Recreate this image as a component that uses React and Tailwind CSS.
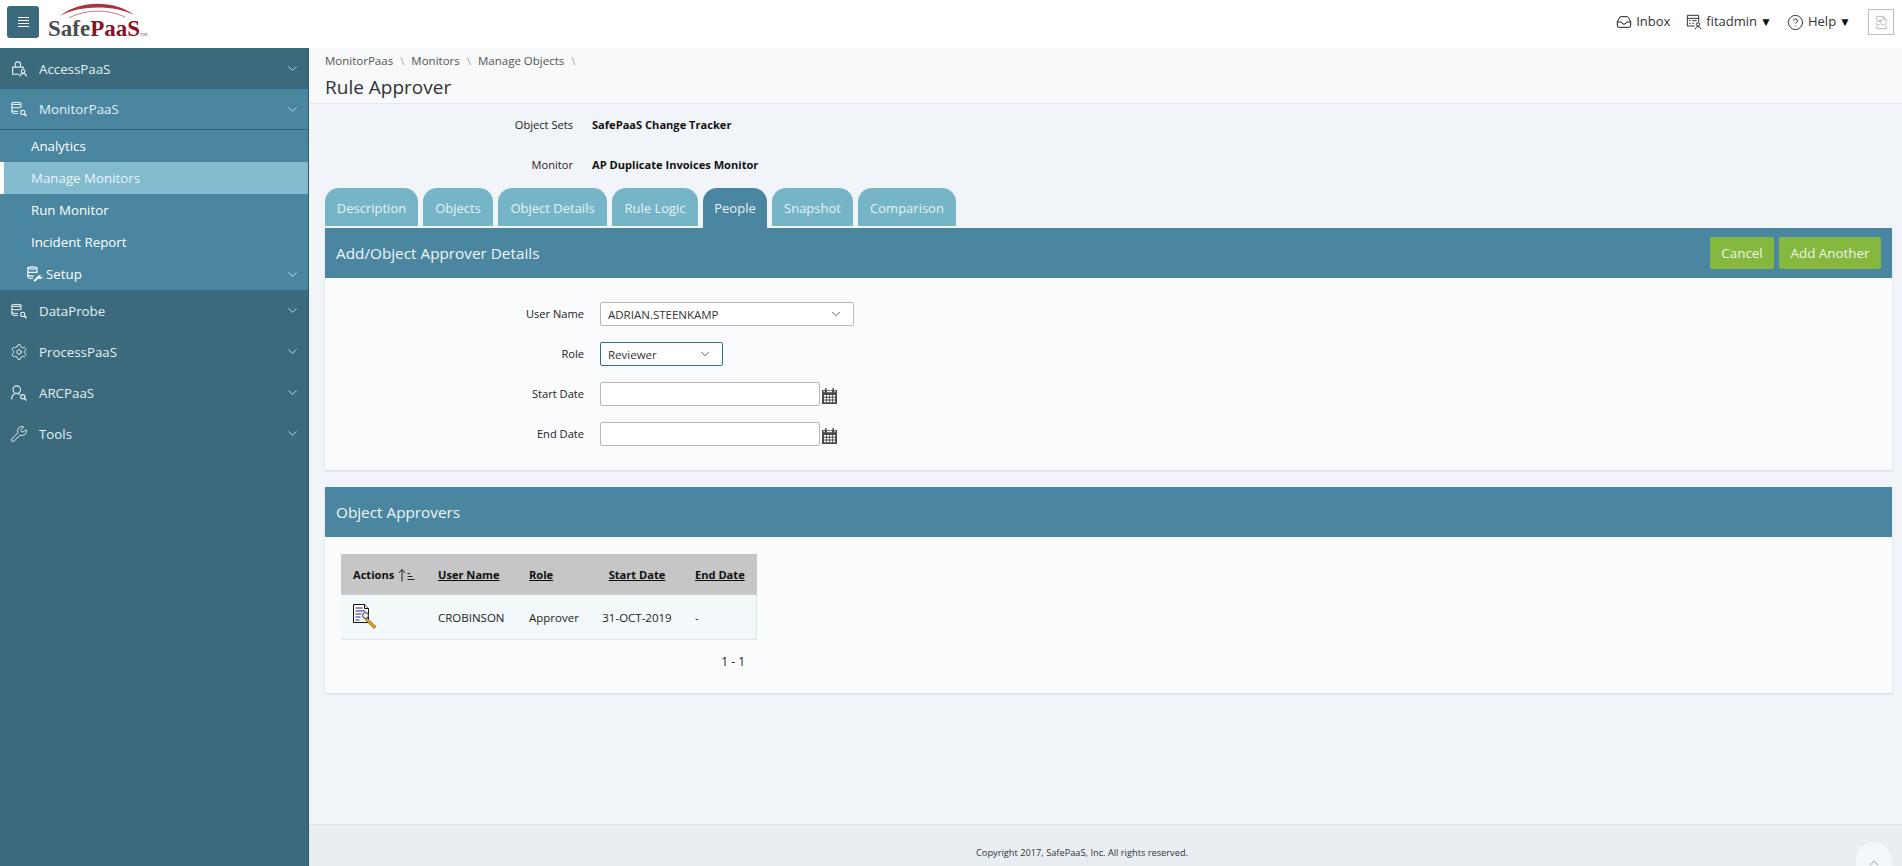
import { ChevronDown, ChevronUp, Inbox, CircleHelp, Settings, Wrench } from 'lucide-react';

const font = { fontFamily: '"Open Sans", "Noto Sans", sans-serif' };

// sidebar icons, drawn on a 24 box
function LockUser({ className }) {
  return (
    <svg viewBox="0 0 24 24" fill="none" stroke="currentColor" strokeWidth="1.5" className={className}>
      <path d="M7 9V6a3.5 3.5 0 0 1 7 0v3" />
      <path d="M12 19H3.5V9.5h14v2" />
      <circle cx="17.5" cy="15" r="2.4" />
      <path d="M13 22c.4-2.6 2.2-4 4.5-4s4.100 1.400 4.500 4" />
    </svg>
  );
}

function DbSearch({ className }) {
  return (
    <svg viewBox="0 0 24 24" fill="none" stroke="currentColor" strokeWidth="1.5" className={className}>
      <path d="M2.500 4.500C2.500 2.800 14.500 2.800 14.500 4.500V10" />
      <path d="M2.500 4.500C2.500 6.500 14.500 6.500 14.500 4.500" />
      <path d="M2.500 4.500V16c0 1.500 4 2.200 8 2" />
      <path d="M2.500 9c0 1.800 12 1.800 12 0M2.500 13.500c0 1.500 5 2 8 1.800" />
      <circle cx="17" cy="16.500" r="2.800" />
      <path d="M19 18.500l3 3" strokeWidth="2" />
    </svg>
  );
}

function DbWrench({ className }) {
  return (
    <svg viewBox="0 0 24 24" fill="none" stroke="currentColor" strokeWidth="1.500" className={className}>
      <path d="M2.500 4C2.500 2 14.500 2 14.500 4V11" />
      <path d="M2.500 4C2.500 6 14.500 6 14.500 4" />
      <path d="M2.500 4V16c0 1.500 4 2.200 7 2" />
      <path d="M2.500 8.500c0 1.800 12 1.800 12 0M2.500 13c0 1.500 5 2 8 1.800" />
      <path d="M11 21.500l5.500-5.500" strokeWidth="2.800" />
      <path d="M16 16.500c-.5-2 1.500-4 4-3.500l-1.500 2 1.500 1.500 2-1.500c.3 2.500-2 4.500-4 3.500z" fill="currentColor" stroke="none" />
    </svg>
  );
}

function UserSearch({ className }) {
  return (
    <svg viewBox="0 0 24 24" fill="none" stroke="currentColor" strokeWidth="1.500" className={className}>
      <circle cx="9" cy="7.500" r="5" />
      <path d="M2 20.500c.4-4.500 3-7 5.200-7.500M11 13.200c.8.200 1.500.6 2 1" />
      <circle cx="17" cy="17" r="2.800" />
      <path d="M19 19l3 3" strokeWidth="2" />
    </svg>
  );
}

function AdminList({ className }) {
  return (
    <svg viewBox="0 0 24 24" fill="none" stroke="currentColor" strokeWidth="1.400" className={className}>
      <path d="M13 18H2V2h17v10" />
      <path d="M2 6.500h17" />
      <path d="M5 10h2M9.500 10H16M5 14h2M9.500 14h2.500" />
      <circle cx="18" cy="15.500" r="2.500" />
      <path d="M14 23c.2-2.500 1.800-4 4-4s3.800 1.500 4 4" />
    </svg>
  );
}

function BrokenImage({ className }) {
  return (
    <svg viewBox="0 0 16 16" fill="none" stroke="#b5b5b5" strokeWidth="1" className={className}>
      <path d="M3 8V1.500h7l3 3V8" />
      <path d="M10 1.500v3h3" />
      <path d="M2 9l3 2 2.500-2 2.500 2 3.500-2" />
      <path d="M3 11.500v3h10v-3" />
      <path d="M5 5.500h3v1.500H5z" />
    </svg>
  );
}

function CalendarIcon() {
  return (
    <svg viewBox="0 0 17 17" className="w-[17px] h-[17px] shrink-0">
      <path d="M1 3h15v14H1z" fill="#4b4b4b" />
      <path d="M4 1h1.500v4H4zM11.500 1H13v4h-1.500z" fill="#4b4b4b" />
      <path d="M2.500 3.700h1.200v1.500h-1.200zM6 3.700h5v1.500H6zM13.300 3.700h1.300v1.500h-1.300z" fill="#f1f5f9" />
      <path d="M3 8h2.200v1.800H3zM6 8h2.200v1.800H6zM9 8h2.200v1.800H9zM12 8h2.200v1.800H12zM3 10.800h2.200v1.800H3zM6 10.800h2.200v1.800H6zM9 10.800h2.200v1.800H9zM12 10.800h2.200v1.800H12zM3 13.500h2.200v1.800H3zM6 13.500h2.200v1.800H6zM9 13.500h2.200v1.800H9zM12 13.500h2.200v1.800H12z" fill="#fff" />
    </svg>
  );
}

function EditIcon() {
  return (
    <svg viewBox="0 0 25 25" className="w-[25px] h-[25px]">
      <path d="M0.500 0.500h11l4 4v14H0.500z" fill="#fff" stroke="#111" />
      <path d="M11.500 0.500v4h4" fill="#ddd" stroke="#111" />
      <path d="M2.500 4h7M2.500 7h10M2.500 10h6M2.500 13h5M2.500 16h4" stroke="#2222aa" strokeWidth="1.200" />
      <circle cx="12.500" cy="11.500" r="3" fill="#dfe6ee" stroke="#333" />
      <path d="M14 14l9 8.500-2 2-9-9z" fill="#e0a020" stroke="#6b4a00" strokeWidth="0.600" />
    </svg>
  );
}

function SortIcon() {
  return (
    <svg viewBox="0 0 18 14" className="w-[18px] h-[14px]" fill="none" stroke="#222" strokeWidth="1">
      <path d="M5 13.500V1.500M2 5l3-3.500L8 5" />
      <path d="M10.500 5.500h2.500M10.500 8.500h5M10.500 11.500h7" />
    </svg>
  );
}

function HamburgerIcon() {
  return (
    <svg viewBox="0 0 11 10" className="w-[11px] h-[10px]" stroke="#fff" strokeWidth="1">
      <path d="M0 0.500h11M0 3.500h11M0 6.500h11M0 9.500h11" />
    </svg>
  );
}

function Logo() {
  return (
    <div className="ml-[9px] pt-[3px] flex flex-col">
      <svg viewBox="0 0 74 15" className="w-[74px] h-[15px] ml-[12px]" fill="none">
        <path d="M0 13C20 -3 54 -3 74 12C54 2 20 2 0 13z" fill="#a93440" />
        <path d="M9 15C26 6 48 6 65 14" stroke="#b8525c" strokeWidth="0.800" />
      </svg>
      <div className="font-bold text-[23px] leading-[24px] -mt-[1px] whitespace-nowrap" style={{ fontFamily: '"Liberation Serif", serif' }}>
        <span className="text-[#4d4d4f]">Safe</span>
        <span className="text-[#8a1225]">PaaS</span>
        <span className="text-[5px] text-[#666] font-normal">TM</span>
      </div>
    </div>
  );
}

function TopNav({ icon: Icon, label, dark }) {
  return (
    <div className={`h-[41px] flex items-center pl-[10px] pr-[8px] text-[#e4f0f4] text-[13.3px] ${dark ? 'bg-[#3b6a7d]' : 'bg-[#4a86a0] border-b border-[#376175]'}`}>
      <span className="w-[29px] shrink-0"><Icon className="w-[18px] h-[18px]" strokeWidth={1.300} /></span>
      <span className="pt-[2px]">{label}</span>
      <ChevronDown className="w-[15px] h-[15px] ml-auto text-[#c4dce5]" strokeWidth={1.500} />
    </div>
  );
}

function SubNav({ label, active }) {
  return (
    <div className={`h-[32px] flex items-center pt-[2px] text-[13.3px] ${active ? 'bg-[#83bbce] border-l-[4px] border-white pl-[27px] text-[#e9f5f8]' : 'pl-[31px] text-white'}`}>{label}</div>
  );
}

function Sidebar() {
  return (
    <aside className="w-[309px] shrink-0 bg-[#3b6a7d] border-r border-[#32596a]">
      <TopNav icon={LockUser} label="AccessPaaS" dark />
      <TopNav icon={DbSearch} label="MonitorPaaS" />
      <div className="bg-[#4a86a0]">
        <SubNav label="Analytics" />
        <SubNav label="Manage Monitors" active />
        <SubNav label="Run Monitor" />
        <SubNav label="Incident Report" />
        <div className="h-[32px] flex items-center pl-[26px] pr-[8px] text-white text-[13.3px]">
          <DbWrench className="w-[18px] h-[18px]" />
          <span className="ml-[2px] pt-[2px]">Setup</span>
          <ChevronDown className="w-[15px] h-[15px] ml-auto text-[#c4dce5]" strokeWidth={1.500} />
        </div>
      </div>
      <TopNav icon={DbSearch} label="DataProbe" dark />
      <TopNav icon={Settings} label="ProcessPaaS" dark />
      <TopNav icon={UserSearch} label="ARCPaaS" dark />
      <TopNav icon={Wrench} label="Tools" dark />
    </aside>
  );
}

const tabs = [
  ['Description', 'w-[93px]'],
  ['Objects', 'w-[70px]'],
  ['Object Details', 'w-[109px]'],
  ['Rule Logic', 'w-[86px]'],
  ['People', 'w-[64px]'],
  ['Snapshot', 'w-[81px]'],
  ['Comparison', 'w-[98px]'],
];

function Tabs() {
  return (
    <div className="flex gap-[5px] mt-[13px] h-[40px]">
      {tabs.map(([t, w]) => (
        <div
          key={t}
          className={`${w} rounded-t-[14px] flex items-center justify-center text-[13px] ${t === 'People' ? 'bg-[#4a86a0] text-[#e9f3f6] h-[40px] pt-[1px]' : 'bg-[#76b5c8] text-[#e4f2f6] h-[38px] pt-[3px]'}`}
        >
          {t}
        </div>
      ))}
    </div>
  );
}

function FormRow({ label, children }) {
  return (
    <div className="flex items-center h-[24px]">
      <label className="w-[275px] text-right text-[11.1px] text-[#222] pr-[16px] pt-[1px]">{label}</label>
      {children}
    </div>
  );
}

function Select({ value, className }) {
  return (
    <div className={`h-[24px] rounded-[2px] bg-white border flex items-center justify-between pl-[7px] pr-[10px] text-[11.5px] text-[#333] ${className}`}>
      <span className="pt-[1px]">{value}</span>
      <ChevronDown className="w-[14px] h-[14px] text-[#444]" strokeWidth={1.400} />
    </div>
  );
}

function DateInput({ label }) {
  return (
    <FormRow label={label}>
      <input aria-label={label} className="w-[220px] h-[24px] bg-white border border-[#b4b9bc] rounded-[2px]" />
      <span className="ml-[1px] mt-[3px]"><CalendarIcon /></span>
    </FormRow>
  );
}

function Panel({ title, right, className, children }) {
  return (
    <section className={`bg-[#f9fbfd] shadow-[0_1px_2px_rgba(0,0,0,0.12)] ${className}`}>
      <div className="h-[50px] bg-[#4a86a0] flex items-center justify-between pl-[11px] pr-[11px]">
        <h2 className="text-[15.3px] text-[#eef6f8] pt-[1px]">{title}</h2>
        {right}
      </div>
      {children}
    </section>
  );
}

function GreenButton({ children, className }) {
  return <button className={`h-[32px] rounded-[2px] bg-[#85b83f] text-[13.4px] text-[#eef6e2] pt-[1px] ${className}`}>{children}</button>;
}

export default function App() {
  return (
    <div className="h-screen overflow-hidden flex flex-col bg-white text-[#222]" style={font}>
      <header className="h-[48px] shrink-0 bg-white flex">
        <button className="w-[32px] h-[32px] ml-[7px] mt-[6px] rounded-[3px] bg-[#3b6a7d] flex items-center justify-center">
          <HamburgerIcon />
        </button>
        <Logo />
        <div className="ml-auto flex items-center h-[44px] text-[13px] text-[#333]">
          <Inbox className="w-[16px] h-[16px] text-[#222]" strokeWidth={1.500} />
          <span className="ml-[4px]">Inbox</span>
          <AdminList className="w-[16px] h-[16px] ml-[16px] text-[#222]" />
          <span className="ml-[4px]">fitadmin</span>
          <span className="ml-[3px] text-[12px] text-[#111]">▼</span>
          <CircleHelp className="w-[17px] h-[17px] ml-[15px] text-[#222]" strokeWidth={1.300} />
          <span className="ml-[4px]">Help</span>
          <span className="ml-[3px] text-[12px] text-[#111]">▼</span>
          <div className="w-[26px] h-[26px] ml-[17px] mr-[8px] border border-[#bdbdbd] flex items-center justify-center">
            <BrokenImage className="w-[15px] h-[15px]" />
          </div>
        </div>
      </header>

      <div className="flex-1 flex min-h-0">
        <Sidebar />
        <main className="flex-1 min-w-0 flex flex-col bg-[#f1f5f9] relative">
          <div className="h-[56px] shrink-0 bg-[#f7f9fb] border-b border-[#e4e8ec] pl-[16px]">
            <div className="flex items-center gap-[7px] text-[11.5px] text-[#555] pt-[3px] h-[22px]">
              <span>MonitorPaas</span><span className="text-[#aaa]">\</span>
              <span>Monitors</span><span className="text-[#aaa]">\</span>
              <span>Manage Objects</span><span className="text-[#aaa]">\</span>
            </div>
            <h1 className="text-[19px] leading-[26px] mt-[4px] text-[#333]">Rule Approver</h1>
          </div>

          <div className="flex-1 pl-[16px] pr-[10px]">
            <div className="flex items-center h-[20px] mt-[11px] text-[11.1px]">
              <span className="w-[248px] text-right">Object Sets</span>
              <span className="ml-[19px] font-bold text-[#111]">SafePaaS Change Tracker</span>
            </div>
            <div className="flex items-center h-[20px] mt-[20px] text-[11.1px]">
              <span className="w-[248px] text-right">Monitor</span>
              <span className="ml-[19px] font-bold text-[#111]">AP Duplicate Invoices Monitor</span>
            </div>
            <Tabs />

            <Panel
              title="Add/Object Approver Details"
              className="h-[242px]"
              right={
                <div className="flex gap-[5px]">
                  <GreenButton className="w-[64px]">Cancel</GreenButton>
                  <GreenButton className="w-[102px]">Add Another</GreenButton>
                </div>
              }
            >
              <div className="pt-[24px] flex flex-col gap-[16px]">
                <FormRow label="User Name"><Select value="ADRIAN.STEENKAMP" className="w-[254px] border-[#b4b9bc]" /></FormRow>
                <FormRow label="Role"><Select value="Reviewer" className="w-[123px] border-[#2f6f80]" /></FormRow>
                <DateInput label="Start Date" />
                <DateInput label="End Date" />
              </div>
            </Panel>

            <Panel title="Object Approvers" className="mt-[17px] h-[206px]">
              <div className="pl-[16px] pt-[17px]">
                <table className="w-[416px] text-[11.5px] border-collapse table-fixed">
                  <thead>
                    <tr className="h-[41px] bg-[#c6c6c6] text-[11.1px] text-[#111] underline">
                      <th className="font-bold pl-[12px] pt-[2px] text-left w-[97px]">
                        <span className="inline-flex items-center gap-[3px]">Actions<SortIcon /></span>
                      </th>
                      <th className="font-bold pt-[2px] text-left w-[91px]">User Name</th>
                      <th className="font-bold pt-[2px] text-left w-[73px]">Role</th>
                      <th className="font-bold pt-[2px] text-center w-[93px] pr-[23px]">Start Date</th>
                      <th className="font-bold pt-[2px] text-left">End Date</th>
                    </tr>
                  </thead>
                  <tbody>
                    <tr className="h-[44px] bg-[#f3f8fa] border-b border-r border-[#dfe6ea]">
                      <td className="pl-[12px]"><EditIcon /></td>
                      <td className="pt-[1px]">CROBINSON</td>
                      <td className="pt-[1px]">Approver</td>
                      <td className="pt-[1px] text-center pr-[23px]">31-OCT-2019</td>
                      <td className="pt-[1px]">-</td>
                    </tr>
                  </tbody>
                </table>
                <div className="w-[404px] text-right text-[12px] mt-[13px]">1 - 1</div>
              </div>
            </Panel>
          </div>

          <footer className="h-[42px] shrink-0 bg-[#e9eef2] border-t border-[#dde3e8] flex items-center pl-[667px] text-[9.25px] text-[#333] pt-[14px]">
            Copyright 2017, SafePaaS, Inc. All rights reserved.
          </footer>
          <button className="absolute right-[10px] bottom-[-17px] w-[36px] h-[41px] rounded-full bg-[#f4f7fa] flex items-start justify-center pt-[14px] text-[#777]">
            <ChevronUp className="w-[14px] h-[14px]" strokeWidth={1.300} />
          </button>
        </main>
      </div>
    </div>
  );
}
